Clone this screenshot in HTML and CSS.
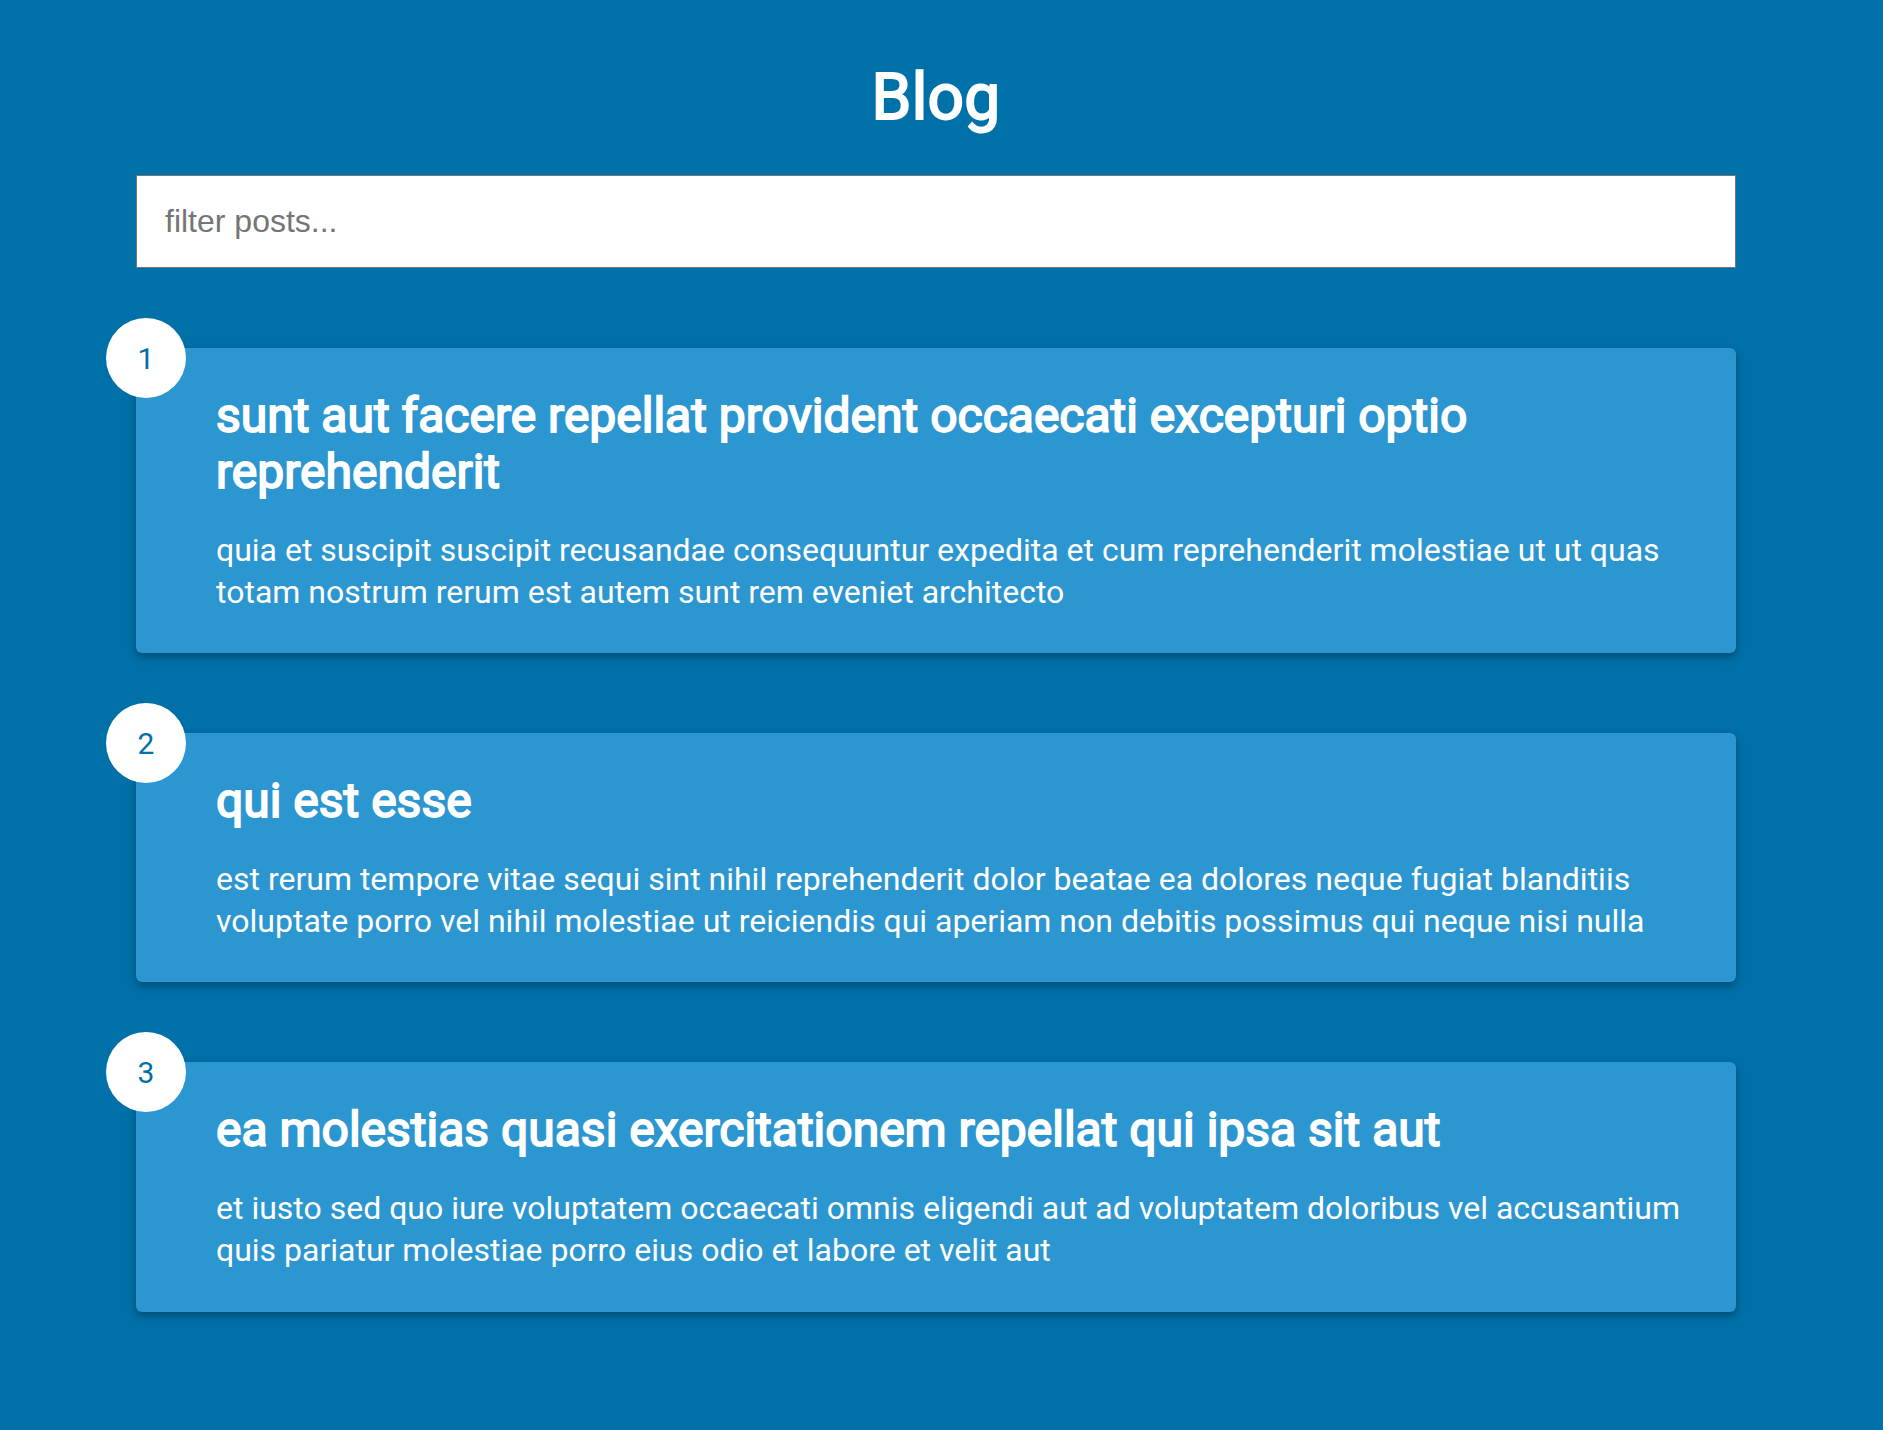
FILE: index.html
```html
<!DOCTYPE html>
<html lang="en">
<head>
<meta charset="UTF-8">
<title>Blog</title>
<link rel="stylesheet" href="styles.css">
</head>
<body>
  <main class="page">
    <h1 class="page-title">Blog</h1>
    <div class="filter-container">
      <input type="text" class="filter" placeholder="filter posts...">
    </div>
    <div class="posts-container">
      <div class="post">
        <div class="number">1</div>
        <div class="post-info">
          <h2 class="post-title">sunt aut facere repellat provident occaecati excepturi optio reprehenderit</h2>
          <p class="post-body">quia et suscipit suscipit recusandae consequuntur expedita et cum reprehenderit molestiae ut ut quas totam nostrum rerum est autem sunt rem eveniet architecto</p>
        </div>
      </div>
      <div class="post">
        <div class="number">2</div>
        <div class="post-info">
          <h2 class="post-title">qui est esse</h2>
          <p class="post-body">est rerum tempore vitae sequi sint nihil reprehenderit dolor beatae ea dolores neque fugiat blanditiis voluptate porro vel nihil molestiae ut reiciendis qui aperiam non debitis possimus qui neque nisi nulla</p>
        </div>
      </div>
      <div class="post">
        <div class="number">3</div>
        <div class="post-info">
          <h2 class="post-title">ea molestias quasi exercitationem repellat qui ipsa sit aut</h2>
          <p class="post-body">et iusto sed quo iure voluptatem occaecati omnis eligendi aut ad voluptatem doloribus vel accusantium quis pariatur molestiae porro eius odio et labore et velit aut</p>
        </div>
      </div>
    </div>
  </main>
</body>
</html>
```

FILE: styles.css
```css
* {
  box-sizing: border-box;
}

html, body {
  margin: 0;
  padding: 0;
}

body {
  background-color: #0070a8;
  color: #fff;
  font-family: Roboto, "Noto Sans", sans-serif;
  min-height: 100vh;
}

.page {
  display: flex;
  flex-direction: column;
  align-items: center;
  padding: 0 11px 200px 0;
}

.page-title {
  margin: 60px 0 0;
  font-size: 64px;
  line-height: 75px;
  font-weight: 400;
  -webkit-text-stroke: 2px #fff;
  letter-spacing: 0.3px;
  text-align: center;
}

.filter-container {
  margin-top: 40px;
  width: 1600px;
}

.filter {
  display: block;
  width: 100%;
  height: 93px;
  padding: 0 28px;
  font-family: "Liberation Sans", Arial, sans-serif;
  font-size: 32px;
  color: #333;
  background: #fff;
  border: 1px solid #767676;
  outline: none;
}

.filter::placeholder {
  color: #757575;
}

.posts-container {
  width: 1600px;
}

.post {
  position: relative;
  display: flex;
  background-color: #2c96d0;
  box-shadow: 0 4px 8px rgba(0, 0, 0, 0.3);
  border-radius: 6px;
  padding: 40px;
  margin: 80px 0;
}

.post-info {
  margin-left: 40px;
}

.post-title {
  margin: 0;
  font-size: 48px;
  line-height: 56px;
  font-weight: 400;
  -webkit-text-stroke: 1.8px #fff;
}

.post-body {
  margin: 30px 0 0;
  font-size: 32px;
  line-height: 1.3;
}

.number {
  position: absolute;
  top: -30px;
  left: -30px;
  width: 80px;
  height: 80px;
  border-radius: 50%;
  background: #fff;
  color: #0070a8;
  font-size: 30px;
  display: flex;
  align-items: center;
  justify-content: center;
}
```
